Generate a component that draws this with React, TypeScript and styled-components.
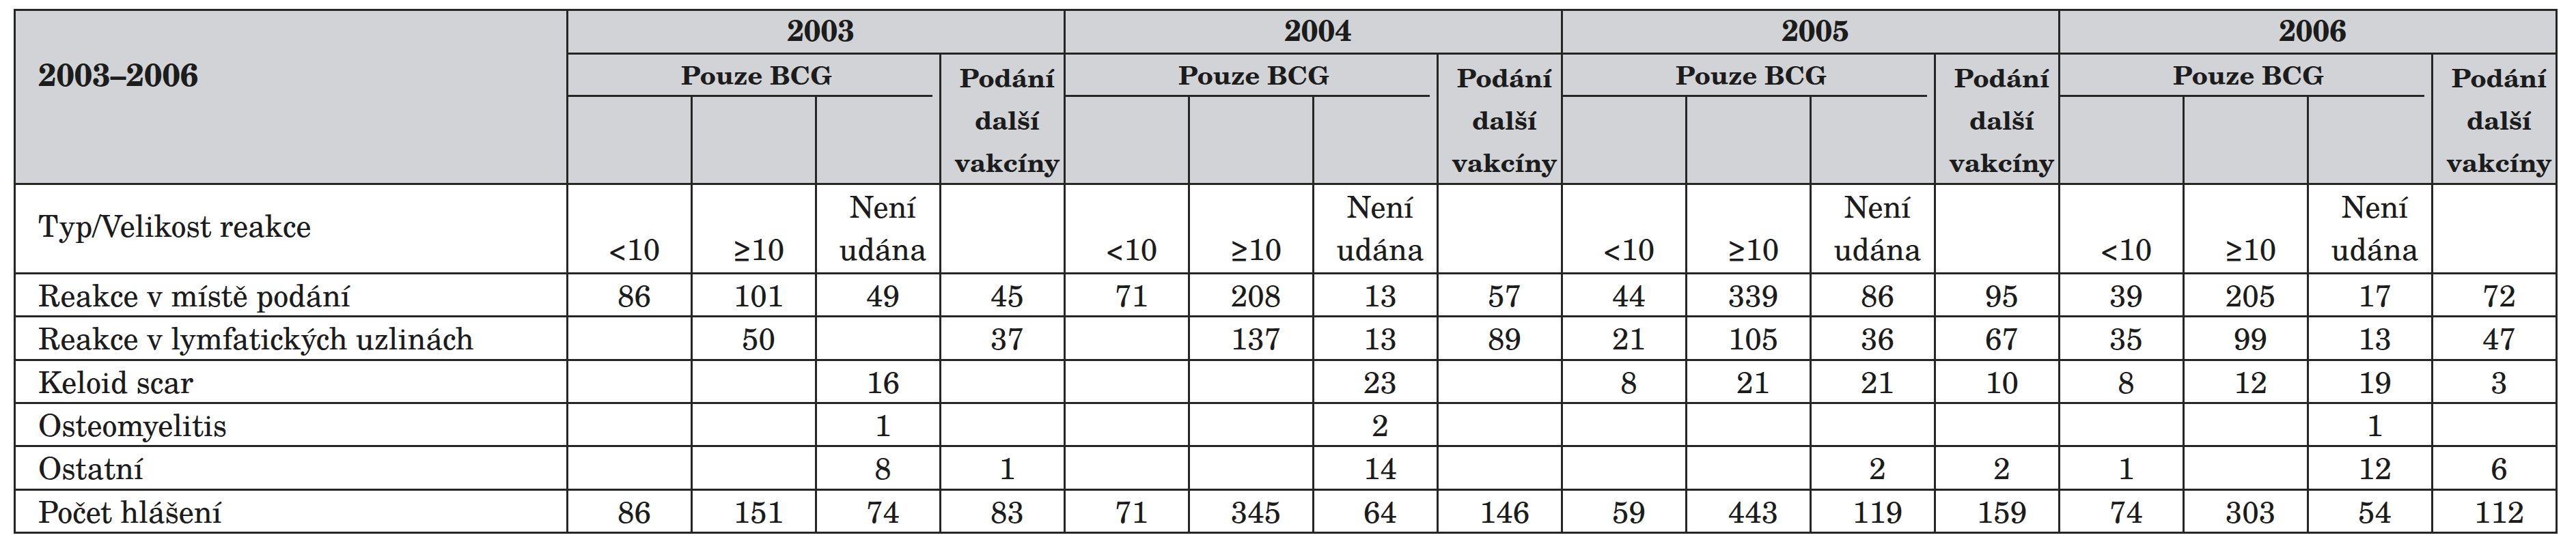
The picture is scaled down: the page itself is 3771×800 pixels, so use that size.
import React from "react";
import styled, { createGlobalStyle, css } from "styled-components";

const LINE = "#262626";
const GRAY = "#d1d3d6";
const FONT = `"Century Schoolbook L", "TeX Gyre Schola", "C059", "New Century Schoolbook", "DejaVu Serif", serif`;

const GlobalStyle = createGlobalStyle`
  html, body { margin: 0; padding: 0; background: #ffffff; }
  body {
    font-family: ${FONT};
    color: #1c1c1c;
  }
`;

const Page = styled.div`
  padding: 13px 0 0 20px;
`;

const Table = styled.table`
  border-collapse: collapse;
  table-layout: fixed;
  width: 3724px;
  border: 3px solid ${LINE};
  font-family: ${FONT};
  color: #1c1c1c;
`;

const FirstCol = styled.col`
  width: 809px;
`;

const Row = styled.tr<{ $h: number; $head?: boolean }>`
  height: ${(p) => p.$h}px;
  background: ${(p) => (p.$head ? GRAY : "#ffffff")};
`;

const cellBase = css`
  border: 3px solid ${LINE};
  padding: 0;
  white-space: nowrap;
  font-family: ${FONT};
`;

const CornerTitle = styled.th`
  ${cellBase};
  text-align: left;
  vertical-align: top;
  padding: 60px 0 0 33px;
  font-size: 46px;
  font-weight: 700;
  line-height: 64px;
`;

const YearCell = styled.th`
  ${cellBase};
  text-align: center;
  vertical-align: top;
  font-size: 43px;
  font-weight: 700;
  line-height: 54px;
  padding-left: 14px;
`;

const GroupCell = styled.th`
  ${cellBase};
  border-bottom: none;
  text-align: center;
  vertical-align: top;
  font-size: 38px;
  font-weight: 700;
  line-height: 58px;
  padding-left: 8px;
  background: linear-gradient(${LINE}, ${LINE}) left bottom / calc(100% - 10px) 3px no-repeat;
`;

const ExtraCell = styled.th`
  ${cellBase};
  text-align: center;
  vertical-align: top;
  font-size: 38px;
  font-weight: 700;
  line-height: 62px;
  padding: 2px 0 0 14px;
`;

const BlankHead = styled.th`
  ${cellBase};
  border-top: none;
`;

const LabelCell = styled.td<{ $raise?: boolean }>`
  ${cellBase};
  text-align: left;
  vertical-align: middle;
  padding: 0 0 ${(p) => (p.$raise ? "10px" : "0")} 33px;
  font-size: 44px;
  line-height: 56px;
`;

const ValueCell = styled.td<{ $bottom?: boolean }>`
  ${cellBase};
  text-align: center;
  vertical-align: ${(p) => (p.$bottom ? "bottom" : "middle")};
  padding: 0 0 ${(p) => (p.$bottom ? "4px" : "0")} 14px;
  font-size: 44px;
  line-height: ${(p) => (p.$bottom ? "62px" : "56px")};
`;

const YEARS = ["2003", "2004", "2005", "2006"];

type Val = number | "";

const ROWS: { label: string; values: Val[] }[] = [
  {
    label: "Reakce v místě podání",
    values: [86, 101, 49, 45, 71, 208, 13, 57, 44, 339, 86, 95, 39, 205, 17, 72],
  },
  {
    label: "Reakce v lymfatických uzlinách",
    values: ["", 50, "", 37, "", 137, 13, 89, 21, 105, 36, 67, 35, 99, 13, 47],
  },
  {
    label: "Keloid scar",
    values: ["", "", 16, "", "", "", 23, "", 8, 21, 21, 10, 8, 12, 19, 3],
  },
  {
    label: "Osteomyelitis",
    values: ["", "", 1, "", "", "", 2, "", "", "", "", "", "", "", 1, ""],
  },
  {
    label: "Ostatní",
    values: ["", "", 8, 1, "", "", 14, "", "", "", 2, 2, 1, "", 12, 6],
  },
  {
    label: "Počet hlášení",
    values: [86, 151, 74, 83, 71, 345, 64, 146, 59, 443, 119, 159, 74, 303, 54, 112],
  },
];

export default function App() {
  return (
    <>
      <GlobalStyle />
      <Page>
        <Table>
          <colgroup>
            <FirstCol />
            {Array.from({ length: 16 }).map((_, i) => (
              <col key={i} />
            ))}
          </colgroup>
          <thead>
            <Row $h={64} $head>
              <CornerTitle rowSpan={3}>2003–2006</CornerTitle>
              {YEARS.map((y) => (
                <YearCell key={y} colSpan={4}>
                  {y}
                </YearCell>
              ))}
            </Row>
            <Row $h={63} $head>
              {YEARS.map((y) => (
                <React.Fragment key={y}>
                  <GroupCell colSpan={3}>Pouze BCG</GroupCell>
                  <ExtraCell rowSpan={2}>
                    Podání
                    <br />
                    další
                    <br />
                    vakcíny
                  </ExtraCell>
                </React.Fragment>
              ))}
            </Row>
            <Row $h={128} $head>
              {YEARS.map((y) => (
                <React.Fragment key={y}>
                  <BlankHead />
                  <BlankHead />
                  <BlankHead />
                </React.Fragment>
              ))}
            </Row>
          </thead>
          <tbody>
            <Row $h={130}>
              <LabelCell $raise>Typ/Velikost reakce</LabelCell>
              {YEARS.map((y) => (
                <React.Fragment key={y}>
                  <ValueCell $bottom>&lt;10</ValueCell>
                  <ValueCell $bottom>≥10</ValueCell>
                  <ValueCell $bottom>
                    Není
                    <br />
                    udána
                  </ValueCell>
                  <ValueCell $bottom />
                </React.Fragment>
              ))}
            </Row>
            {ROWS.map((r) => (
              <Row key={r.label} $h={63.33}>
                <LabelCell>{r.label}</LabelCell>
                {r.values.map((v, i) => (
                  <ValueCell key={i}>{v}</ValueCell>
                ))}
              </Row>
            ))}
          </tbody>
        </Table>
      </Page>
    </>
  );
}
